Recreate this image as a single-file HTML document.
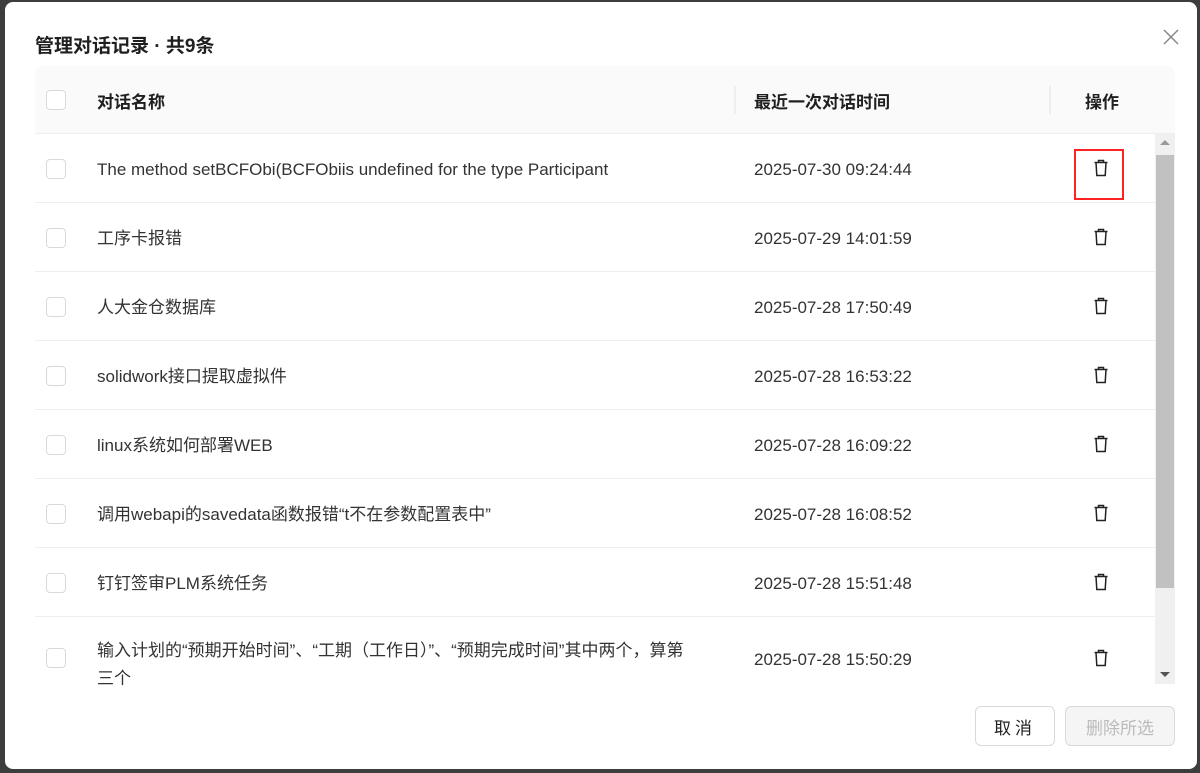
<!DOCTYPE html>
<html><head><meta charset="utf-8"><style>
*{box-sizing:border-box;margin:0;padding:0}
body{width:1200px;height:773px;background:#3d3d3d;font-family:"Liberation Sans","Noto Sans CJK SC",sans-serif;position:relative;overflow:hidden}
.modal{position:absolute;left:5px;top:2px;width:1192px;height:767px;background:#fff;border-radius:8px}
.title{position:absolute;left:30px;top:29px;font-size:19px;font-weight:bold;color:#1f1f1f}
.close{position:absolute;left:1158px;top:27px}
.table{position:absolute;left:30px;top:64px;width:1140px}
.head{height:68px;background:#fafafa;border-radius:8px 8px 0 0;border-bottom:1px solid #eee;position:relative;font-weight:bold;font-size:17px;color:#1f1f1f}
.head div.l{position:absolute;top:0;height:68px;display:flex;align-items:center}
.cb{position:absolute;left:11px;width:20px;height:20px;border:1px solid #d9d9d9;border-radius:4px;background:#fff}
.row{height:69px;border-bottom:1px solid #eee;position:relative;font-size:17px;color:#333;width:1120px}
.row>div.c{position:absolute;top:0;height:100%;display:flex;align-items:center;padding-top:3px}
.sb{position:absolute;left:1150px;top:132px;width:20px;height:550px;background:#f0f0f0}
.thumb{position:absolute;left:1px;top:21px;width:18px;height:433px;background:#c1c1c1}
.btn{position:absolute;top:704px;height:40px;border:1px solid #d9d9d9;border-radius:6px;font-size:17px;display:flex;align-items:center;justify-content:center}
</style></head><body>
<div class="modal">
<div class="title">管理对话记录 · 共9条</div>
<svg class="close" width="16" height="16" viewBox="0 0 16 16"><path d="M1 1L15 15M15 1L1 15" stroke="#888" stroke-width="1.5"/></svg>
<div class="table">
<div class="head">
<div class="cb" style="top:24px"></div>
<div class="l" style="left:62px">对话名称</div>
<div style="position:absolute;left:699px;top:20px;width:2px;height:28px;background:#eee"></div>
<div class="l" style="left:719px">最近一次对话时间</div>
<div style="position:absolute;left:1014px;top:20px;width:2px;height:28px;background:#eee"></div>
<div class="l" style="left:1050px">操作</div>
</div>
<div id="rows"></div>
</div>
<div class="sb"><div style="position:absolute;left:5px;top:6px;border:5px solid transparent;border-bottom:5px solid #999;border-top:0"></div><div class="thumb"></div><div style="position:absolute;left:5px;top:538px;border:5px solid transparent;border-top:5px solid #555;border-bottom:0"></div></div>
<div style="position:absolute;left:1069px;top:147px;width:50px;height:51px;border:2px solid #f22"></div>
<div class="btn" style="left:970px;width:80px;color:#222;letter-spacing:4px">取消</div>
<div class="btn" style="left:1060px;width:110px;color:#bbb;background:#f5f5f5">删除所选</div>
</div>
<script>
var d=[["The method setBCFObi(BCFObiis undefined for the type Participant","2025-07-30 09:24:44"],["工序卡报错","2025-07-29 14:01:59"],["人大金仓数据库","2025-07-28 17:50:49"],["solidwork接口提取虚拟件","2025-07-28 16:53:22"],["linux系统如何部署WEB","2025-07-28 16:09:22"],["调用webapi的savedata函数报错“t不在参数配置表中”","2025-07-28 16:08:52"],["钉钉签审PLM系统任务","2025-07-28 15:51:48"],["输入计划的“预期开始时间”、“工期（工作日）”、“预期完成时间”其中两个，算第三个","2025-07-28 15:50:29"]];
var ic='<svg width="16" height="18" viewBox="0 0 16 18"><path d="M1.5 3.5H14.5M5.5 3.5V1.5H10.5V3.5M3 3.5L3.8 16.5H12.2L13 3.5" fill="none" stroke="#222" stroke-width="1.5"/></svg>';
var h='';d.forEach(function(r,i){var last=i==7;var hh=last?82:69;
h+='<div class="row" style="height:'+hh+'px;'+(last?'border:none':'')+'"><div class="cb" style="top:'+(hh/2-10)+'px"></div><div class="c" style="left:62px;width:592px;line-height:28px;'+(last?'align-items:flex-start;padding-top:20px':'')+'">'+r[0]+'</div><div class="c" style="left:719px">'+r[1]+'</div><div class="c" style="left:1058px;padding-top:0">'+ic+'</div></div>';});
document.getElementById('rows').innerHTML=h;
</script>
</body></html>
